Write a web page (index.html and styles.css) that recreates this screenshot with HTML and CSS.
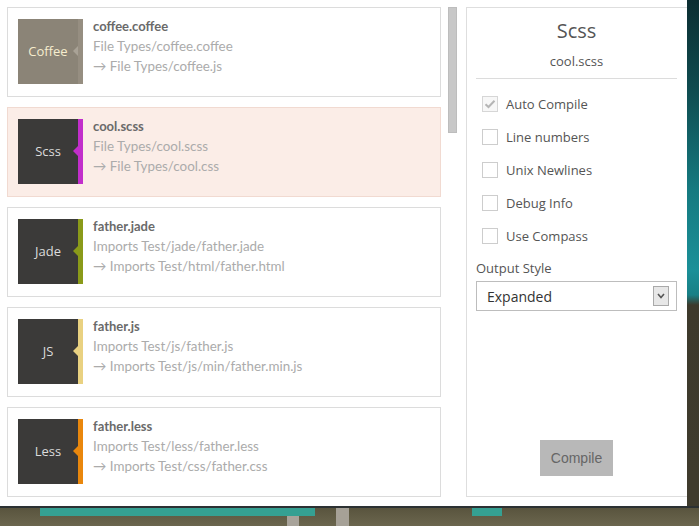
FILE: index.html
```html
<!DOCTYPE html>
<html>
<head>
<meta charset="utf-8">
<link rel="stylesheet" href="styles.css">
</head>
<body>
<div class="app">
  <div class="list">
    <div class="card">
      <div class="icon coffee"><span class="lbl">Coffee</span><span class="stripe"></span></div>
      <div class="info">
        <div class="name">coffee.coffee</div>
        <div class="path">File Types/coffee.coffee</div>
        <div class="path">→ File Types/coffee.js</div>
      </div>
    </div>
    <div class="card selected">
      <div class="icon scss"><span class="lbl">Scss</span><span class="stripe"></span></div>
      <div class="info">
        <div class="name">cool.scss</div>
        <div class="path">File Types/cool.scss</div>
        <div class="path">→ File Types/cool.css</div>
      </div>
    </div>
    <div class="card">
      <div class="icon jade"><span class="lbl">Jade</span><span class="stripe"></span></div>
      <div class="info">
        <div class="name">father.jade</div>
        <div class="path">Imports Test/jade/father.jade</div>
        <div class="path">→ Imports Test/html/father.html</div>
      </div>
    </div>
    <div class="card">
      <div class="icon js"><span class="lbl">JS</span><span class="stripe"></span></div>
      <div class="info">
        <div class="name">father.js</div>
        <div class="path">Imports Test/js/father.js</div>
        <div class="path">→ Imports Test/js/min/father.min.js</div>
      </div>
    </div>
    <div class="card">
      <div class="icon less"><span class="lbl">Less</span><span class="stripe"></span></div>
      <div class="info">
        <div class="name">father.less</div>
        <div class="path">Imports Test/less/father.less</div>
        <div class="path">→ Imports Test/css/father.css</div>
      </div>
    </div>
  </div>
  <div class="scrolltrack"><div class="thumb"></div></div>
  <div class="panel">
    <div class="title">Scss</div>
    <div class="subtitle">cool.scss</div>
    <div class="rule"></div>
    <div class="options">
      <div class="opt"><span class="box checked"><svg width="12" height="10" viewBox="0 0 12 10"><path d="M1.5 5.2 L4.5 8 L10.5 1.8" fill="none" stroke="#b5b5b5" stroke-width="2"/></svg></span><span>Auto Compile</span></div>
      <div class="opt"><span class="box"></span><span>Line numbers</span></div>
      <div class="opt"><span class="box"></span><span>Unix Newlines</span></div>
      <div class="opt"><span class="box"></span><span>Debug Info</span></div>
      <div class="opt"><span class="box"></span><span>Use Compass</span></div>
    </div>
    <div class="field-label">Output Style</div>
    <div class="select">
      <span class="sel-text">Expanded</span>
      <span class="sel-btn"><svg width="8" height="6" viewBox="0 0 8 6"><path d="M1 1 L4 4.5 L7 1" fill="none" stroke="#555" stroke-width="1.6"/></svg></span>
    </div>
    <div class="compile">Compile</div>
  </div>
</div>
</body>
</html>
```
FILE: styles.css
```css
html, body {
  margin: 0;
  padding: 0;
}
body {
  width: 699px;
  height: 526px;
  overflow: hidden;
  background-color: #4c4836;
  background-image:
    linear-gradient(#2c3133, #2c3133),
    linear-gradient(#35a092, #35a092),
    linear-gradient(#35a092, #35a092),
    linear-gradient(#a8a39a, #a8a39a),
    linear-gradient(#a6a197, #a6a197),
    linear-gradient(to bottom, #0c2e31 0, #0f4c50 90px, #157a80 190px, #1b9098 270px, #187f85 295px, #3d3a2c 305px, #3f3b2d 480px),
    linear-gradient(to bottom, #57523c 0, #6b664e 100%);
  background-repeat: no-repeat;
  background-position:
    0 506px,
    40px 508px,
    472px 508px,
    287px 508px,
    336px 508px,
    687px 0,
    0 506px;
  background-size:
    699px 2px,
    275px 8px,
    30px 8px,
    12px 20px,
    13px 20px,
    12px 506px,
    699px 20px;
}
.app {
  box-sizing: border-box;
  width: 687px;
  height: 506px;
  background: #fff;
  padding: 7px 0 0 7px;
  display: flex;
  align-items: flex-start;
  overflow: hidden;
}
.list {
  width: 434px;
  display: flex;
  flex-direction: column;
  gap: 10px;
  font-family: Lato, "Open Sans", sans-serif;
}
.card {
  box-sizing: border-box;
  height: 90px;
  border: 1px solid #dcdcdc;
  background: #fff;
  padding: 11px 10px;
  display: flex;
  gap: 10px;
}
.card.selected {
  background: #fbede7;
  border-color: #f1dad1;
}
.icon {
  width: 65px;
  height: 65px;
  display: flex;
  flex: none;
  position: relative;
}
.icon .lbl {
  width: 60px;
  display: flex;
  align-items: center;
  justify-content: center;
  padding-bottom: 1px;
  font-family: "Open Sans", sans-serif;
  font-size: 13px;
  color: #dcdcdc;
  background: #3b3a39;
}
.icon .stripe {
  width: 5px;
  position: relative;
}
.icon .stripe::before {
  content: "";
  position: absolute;
  left: -5px;
  top: 27px;
  border-style: solid;
  border-width: 5px 5px 5px 0;
  border-color: transparent;
}
.coffee .lbl { background: #8b8477; color: #f6edce; }
.coffee .stripe { background: #968e81; }
.coffee .stripe::before { border-right-color: #a9a296; }
.scss .stripe { background: #c22ecb; }
.scss .stripe::before { border-right-color: #c22ecb; }
.jade .stripe { background: #8a9a19; }
.jade .stripe::before { border-right-color: #8a9a19; }
.js .stripe { background: #e9d181; }
.js .stripe::before { border-right-color: #e9d181; }
.less .stripe { background: #e9870d; }
.less .stripe::before { border-right-color: #e9870d; }
.info {
  margin-top: -3px;
  font-size: 13px;
  line-height: 20px;
  white-space: nowrap;
}
.name {
  font-weight: bold;
  color: #6a6a6a;
}
.path {
  color: #ababab;
  font-size: 13.4px;
}
.scrolltrack {
  width: 9px;
  margin-left: 7px;
  height: 126px;
}
.thumb {
  box-sizing: border-box;
  height: 126px;
  background: #c8c8c8;
  border: 1px solid #bdbdbd;
}
.panel {
  box-sizing: border-box;
  margin-left: 9px;
  width: 221px;
  height: 490px;
  border: 1px solid #dedede;
  border-right: none;
  padding: 9px 10px 0 9px;
  display: flex;
  flex-direction: column;
  font-family: "Open Sans", sans-serif;
  color: #555;
}
.title {
  text-align: center;
  font-size: 20px;
  line-height: 28px;
}
.subtitle {
  margin-top: 6px;
  text-align: center;
  font-size: 13px;
  line-height: 20px;
}
.rule {
  margin-top: 7px;
  border-top: 1px solid #dcdcdc;
}
.options {
  margin-top: 8px;
  display: flex;
  flex-direction: column;
}
.opt {
  height: 33px;
  display: flex;
  align-items: center;
  gap: 8px;
  padding-left: 6px;
  font-size: 13px;
}
.box {
  box-sizing: border-box;
  width: 16px;
  height: 16px;
  border: 1px solid #cdcdcd;
  background: #fff;
  display: flex;
  align-items: center;
  justify-content: center;
}
.box.checked {
  border-color: #d6d6d6;
  background: #f7f7f7;
}
.field-label {
  margin-top: 6px;
  font-size: 13px;
  line-height: 20px;
}
.select {
  box-sizing: border-box;
  margin-top: 3px;
  height: 30px;
  border: 1px solid #bdbdbd;
  display: flex;
  align-items: center;
  justify-content: space-between;
  padding: 0 7px 0 10px;
}
.sel-text {
  font-size: 14px;
  color: #333;
}
.sel-btn {
  box-sizing: border-box;
  width: 16px;
  height: 20px;
  background: #e7e7e7;
  border: 1px solid #a9a9a9;
  display: flex;
  align-items: center;
  justify-content: center;
}
.compile {
  margin: auto auto 20px;
  width: 73px;
  height: 36px;
  background: #b8b8b8;
  color: #666;
  font-family: "Liberation Sans", Arial, sans-serif;
  font-size: 14px;
  display: flex;
  align-items: center;
  justify-content: center;
}
```
